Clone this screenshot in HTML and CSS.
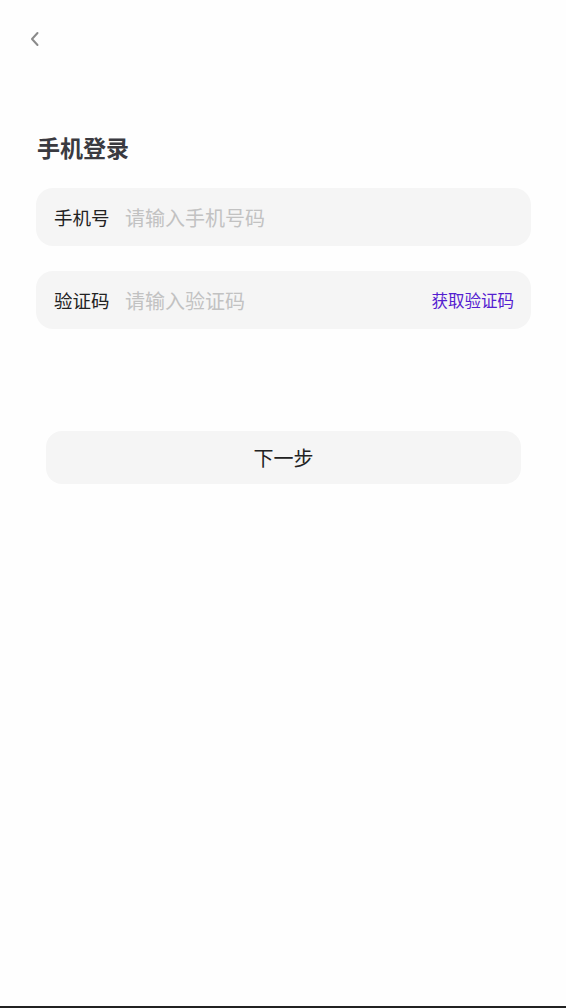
FILE: index.html
```html
<!DOCTYPE html>
<html lang="zh-CN">
<head>
<meta charset="UTF-8">
<meta name="viewport" content="width=device-width, initial-scale=1.0">
<title>手机登录</title>
<link rel="stylesheet" href="styles.css">
</head>
<body>

<div class="page">
  <div class="top-bar">
    <button class="back-btn" type="button" aria-label="返回">
      <svg width="12" height="18" viewBox="0 0 12 18">
        <path d="M8.5 3 L3 9 L8.5 15" fill="none" stroke="#8a8a8a" stroke-width="2" stroke-linecap="round" stroke-linejoin="round"/>
      </svg>
    </button>
  </div>

  <div class="content">
    <h1 class="title">手机登录</h1>

    <div class="field">
      <span class="field-label">手机号</span>
      <input class="field-input" type="tel" placeholder="请输入手机号码">
    </div>

    <div class="field">
      <span class="field-label">验证码</span>
      <input class="field-input" type="text" placeholder="请输入验证码">
      <button class="code-btn" type="button">获取验证码</button>
    </div>

    <button class="next-btn" type="button">下一步</button>
  </div>

  <div class="home-bar"></div>
</div>

</body>
</html>
```

FILE: styles.css
```css
html, body {
  margin: 0;
  padding: 0;
  height: 100%;
}
body {
  font-family: "Noto Sans CJK SC", "Noto Sans", sans-serif;
  background-color: #fefefe;
  color: #222;
}
.page {
  min-height: 100vh;
  display: flex;
  flex-direction: column;
}
.top-bar {
  height: 76px;
  padding: 29px 0 0 28px;
  box-sizing: border-box;
}
.back-btn {
  border: none;
  background: none;
  padding: 0;
  width: 14px;
  height: 18px;
  cursor: pointer;
}
.content {
  flex: 1;
  padding: 0 35px 0 36px;
}
.title {
  margin: 56px 0 26px 1px;
  font-size: 23px;
  line-height: 30px;
  font-weight: bold;
  color: #3a3a40;
}
.field {
  display: flex;
  align-items: center;
  height: 58px;
  margin-bottom: 25px;
  padding: 0 17px 0 18px;
  background-color: #f5f5f5;
  border-radius: 17px;
}
.field-label {
  width: 71px;
  flex-shrink: 0;
  font-size: 18.5px;
  color: #222;
}
.field-input {
  flex: 1;
  min-width: 0;
  border: none;
  outline: none;
  background: transparent;
  font-family: inherit;
  font-size: 20px;
  color: #222;
  padding: 0;
}
.field-input::placeholder {
  color: #c2c2c2;
}
.code-btn {
  border: none;
  background: none;
  padding: 0;
  font-family: inherit;
  font-size: 16.5px;
  color: #5420d0;
  cursor: pointer;
}
.next-btn {
  display: block;
  width: calc(100% - 20px);
  height: 53px;
  margin: 102px auto 0;
  border: none;
  border-radius: 16px;
  background-color: #f5f5f5;
  font-family: inherit;
  font-size: 20px;
  color: #222;
  cursor: pointer;
}
.home-bar {
  height: 2px;
  background-color: #222;
}
```
